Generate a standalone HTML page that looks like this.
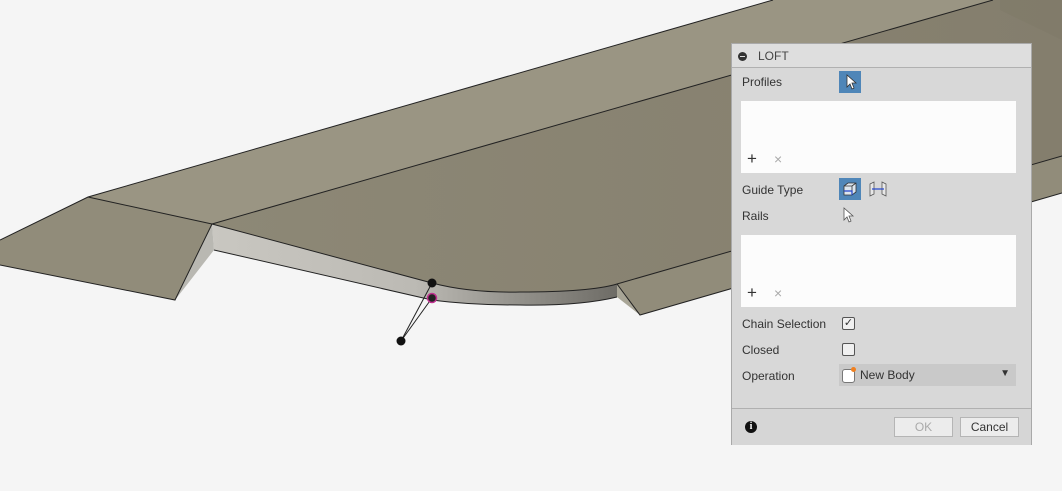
<!DOCTYPE html>
<html><head><style>
body{margin:0;width:1062px;height:491px;overflow:hidden;background:#f5f5f5;font-family:"Liberation Sans",sans-serif;position:relative}
svg.bg{position:absolute;left:0;top:0}
.p{position:absolute;left:731px;top:43px;width:299px;height:400px;background:#d8d8d8;border:1px solid #a9a9a9;font-size:12px;color:#333}
.a{position:absolute}
.hd{left:0;top:0;width:299px;height:23px;background:#dedede;border-bottom:1px solid #b0b0b0}
.box{left:9px;width:275px;height:72px;background:#fcfcfc}
.lbl{left:10px}
.btn{height:18px;border:1px solid #b5b5b5;background:#ececec;text-align:center;line-height:18px;font-size:12px}
</style></head><body>
<svg class="bg" width="1062" height="491">
<defs>
<linearGradient id="fr" x1="0" x2="1"><stop offset="0" stop-color="#c9c7c1"/><stop offset=".5" stop-color="#bcbab4"/><stop offset=".7" stop-color="#9c9a94"/><stop offset="1" stop-color="#6e6c66"/></linearGradient>
<linearGradient id="tp" x1="0" x2="1"><stop offset="0" stop-color="#8d8876"/><stop offset="1" stop-color="#847e6d"/></linearGradient>
</defs>
<polygon points="88,197 773,0 993,0 212,224" fill="#9a9583"/>
<path d="M993,0 L1062,0 L1062,156 L617,284 Q590,292 520,292 Q470,293 432,283 L212,224 Z" fill="url(#tp)"/>
<polygon points="1000,0 1062,0 1062,40 1000,10" fill="#7f7a69" opacity=".6"/>
<polygon points="617,284 1062,156 1062,193 640,315" fill="#918c7a"/>
<polygon points="617,284 617,297 640,315" fill="#a8a596"/>
<path d="M212,224 L432,283 Q470,293 520,292 Q590,292 617,284 L617,297 Q580,306 520,305 Q470,305 432,300 L214,250 Z" fill="url(#fr)"/>
<polygon points="0,240 88,197 212,224 175,300 0,265" fill="#918c7a"/>
<polygon points="212,224 214,250 175,300" fill="#b9b8b2"/>
<g stroke="#222" stroke-width="1" fill="none">
<polyline points="0,240 88,197 773,0"/>
<line x1="88" y1="197" x2="212" y2="224"/>
<line x1="212" y1="224" x2="993" y2="0"/>
<path d="M212,224 L432,283 Q470,293 520,292 Q590,292 617,284 L1062,156"/>
<path d="M214,250 L432,300 Q470,305 520,305 Q580,306 617,297"/>
<polyline points="0,265 175,300 212,224"/>
<polyline points="617,284 640,315 1062,193"/>
<line x1="432" y1="283" x2="401" y2="341"/><line x1="432" y1="298" x2="401" y2="341"/>
</g>
<circle cx="432" cy="283" r="4.5" fill="#111"/>
<circle cx="432" cy="298" r="4.5" fill="#222" stroke="#c03090" stroke-width="1.5"/>
<circle cx="401" cy="341" r="4.5" fill="#111"/>
<path d="M1021,301 L1021,317 L1025,313 L1028,320 L1030,319 L1027,312 L1032,312 Z" fill="#000" stroke="#fff" stroke-width=".8"/>
</svg>
<div class="p">
<div class="a hd"><div class="a" style="left:6px;top:8px;width:9px;height:9px;border-radius:50%;background:#333"><div class="a" style="left:2px;top:4px;width:5px;height:1px;background:#ddd"></div></div><div class="a" style="left:26px;top:5px;color:#444">LOFT</div></div>
<div class="a lbl" style="top:31px">Profiles</div>
<div class="a" style="left:107px;top:27px;width:22px;height:22px;background:#4f86b8"><svg width="22" height="22"><path d="M8,4 L8,16 L11,13 L13,18 L15,17 L13,12 L17,12 Z" fill="#fff" stroke="#333" stroke-width=".8"/></svg></div>
<div class="a box" style="top:57px"><div class="a" style="left:6px;top:48px;font-size:17px;color:#333">+</div><div class="a" style="left:33px;top:50px;font-size:14px;color:#aaa">×</div></div>
<div class="a lbl" style="top:139px">Guide Type</div>
<div class="a" style="left:107px;top:134px;width:22px;height:22px;background:#4f86b8"><svg width="22" height="22"><path d="M5,8 L9,5 L17,5 L17,14 L13,17 L5,17 Z M5,8 L13,8 L13,17 M13,8 L17,5" fill="#dde6ee" stroke="#333" stroke-width=".8"/><path d="M5,13 L13,13 L13,17" stroke="#2244cc" fill="none" stroke-width="1.2"/></svg></div>
<div class="a" style="left:136px;top:136px"><svg width="20" height="18"><path d="M2,4 L6,2 L6,14 L2,16 Z M14,2 L18,4 L18,16 L14,14 Z" fill="#e8e8e8" stroke="#555" stroke-width=".8"/><path d="M4,9 L16,9" stroke="#2244cc" stroke-width="1.2"/></svg></div>
<div class="a lbl" style="top:165px">Rails</div>
<div class="a" style="left:110px;top:163px"><svg width="14" height="18"><path d="M2,1 L2,13 L5,10 L7,15 L9,14 L7,9 L11,9 Z" fill="#fff" stroke="#555" stroke-width=".8"/></svg></div>
<div class="a box" style="top:191px"><div class="a" style="left:6px;top:48px;font-size:17px;color:#333">+</div><div class="a" style="left:33px;top:50px;font-size:14px;color:#aaa">×</div></div>
<div class="a lbl" style="top:273px">Chain Selection</div>
<div class="a" style="left:110px;top:273px;width:11px;height:11px;border:1px solid #555;border-radius:2px;background:#f0f0f0;font-size:11px;line-height:11px;text-align:center">✓</div>
<div class="a lbl" style="top:299px">Closed</div>
<div class="a" style="left:110px;top:299px;width:11px;height:11px;border:1px solid #555;border-radius:2px;background:#f0f0f0"></div>
<div class="a lbl" style="top:325px">Operation</div>
<div class="a" style="left:107px;top:320px;width:177px;height:22px;background:#c9c9c9"><div class="a" style="left:3px;top:5px;width:11px;height:12px;border:1px solid #777;border-radius:3px;background:#fff"></div><div class="a" style="left:12px;top:3px;width:5px;height:5px;border-radius:50%;background:#f08020"></div><div class="a" style="left:21px;top:4px">New Body</div><div class="a" style="right:6px;top:4px;font-size:10px">▼</div></div>
<div class="a" style="left:0;top:364px;width:299px;height:36px;background:#d6d6d6;border-top:1px solid #b0b0b0"></div>
<div class="a" style="left:13px;top:377px;width:12px;height:12px;border-radius:50%;background:#111;color:#fff;font-size:10px;font-weight:bold;text-align:center;line-height:12px;font-family:'Liberation Serif',serif">i</div>
<div class="a btn" style="left:162px;top:373px;width:57px;color:#aaa">OK</div>
<div class="a btn" style="left:228px;top:373px;width:57px;color:#333">Cancel</div>
</div>
</body></html>
